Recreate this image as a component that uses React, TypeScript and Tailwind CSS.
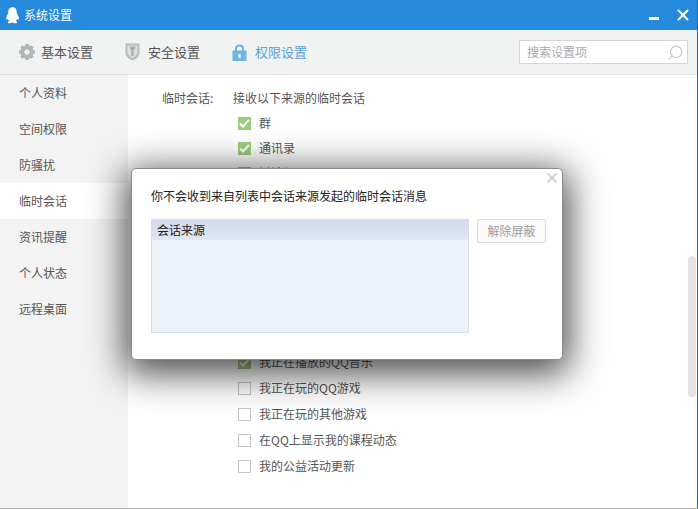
import { Search, X } from "lucide-react";

const font = "font-['Noto_Sans_CJK_SC','Liberation_Sans',sans-serif]";

const sideItems = ["个人资料", "空间权限", "防骚扰", "临时会话", "资讯提醒", "个人状态", "远程桌面"];

const bottomItems = [
  { label: "我正在播放的QQ音乐", checked: true },
  { label: "我正在玩的QQ游戏", checked: false },
  { label: "我正在玩的其他游戏", checked: false },
  { label: "在QQ上显示我的课程动态", checked: false },
  { label: "我的公益活动更新", checked: false },
];

function Penguin() {
  return (
    <svg width="13" height="17" viewBox="0 0 13 17" fill="white">
      <path d="M6.5 0.3C3.4 0.3 2.3 2.6 2.3 5.2C2.3 6.4 1.7 7.2 1 8.6C0.1 10.4 -0.1 12.2 0.4 12.6C0.8 12.9 1.4 12.4 1.8 11.8C2.1 12.8 2.6 13.4 3.2 14C2.1 14.3 1.6 15 2 15.7C2.6 16.6 5.2 16.4 6.5 15.6C7.8 16.4 10.4 16.6 11 15.7C11.4 15 10.9 14.3 9.8 14C10.4 13.4 10.9 12.8 11.2 11.8C11.6 12.4 12.2 12.9 12.6 12.6C13.1 12.2 12.9 10.4 12 8.6C11.3 7.2 10.7 6.4 10.7 5.2C10.7 2.6 9.6 0.3 6.5 0.3Z" />
    </svg>
  );
}

function Gear() {
  return (
    <svg width="18" height="18" viewBox="0 0 18 18">
      <circle cx="9" cy="9" r="4.6" fill="none" stroke="#b2b6b6" strokeWidth="4" />
      <g stroke="#b2b6b6" strokeWidth="3.4">
        <path d="M9 1V3.5M9 14.5V17M1 9H3.5M14.5 9H17M3.4 3.4L5 5M13 13L14.6 14.6M14.6 3.4L13 5M5 13L3.4 14.6" />
      </g>
    </svg>
  );
}

function Shield() {
  return (
    <svg width="15" height="18" viewBox="0 0 15 18">
      <path d="M0.5 0.5H14.5V10C14.5 13.5 11 16 7.5 17.5C4 16 0.5 13.5 0.5 10Z" fill="#b8bcbc" />
      <path d="M2.5 2.5H12.5V9.5C12.5 12 9.8 14 7.5 15.2C5.2 14 2.5 12 2.5 9.5Z" fill="#dcdfdf" />
      <path d="M4 3.5H11L8.6 7.5V13H6.4V7.5Z" fill="#a8acac" />
    </svg>
  );
}

function Lock() {
  return (
    <svg width="15" height="17" viewBox="0 0 15 17">
      <path d="M4 8V4.6C4 2.6 5.5 1.4 7.5 1.4C9.5 1.4 11 2.6 11 4.6V8" fill="none" stroke="#6fb2ea" strokeWidth="2" />
      <rect x="0.5" y="6.5" width="14" height="10.5" fill="#6fb2ea" />
      <rect x="6.4" y="10" width="2.2" height="4" fill="#ffffff" />
    </svg>
  );
}

function Check({ checked }: { checked: boolean }) {
  if (!checked) {
    return <span className="w-[13px] h-[13px] border border-[#c4c4c4] bg-white shrink-0" />;
  }
  return (
    <span className="w-[13px] h-[13px] bg-[#9ccc7f] flex items-center justify-center shrink-0">
      <svg width="11" height="9" viewBox="0 0 11 9" fill="none" stroke="white" strokeWidth="2">
        <path d="M1 4.5L4 7.5L10 1" />
      </svg>
    </span>
  );
}

function Row({ label, checked }: { label: string; checked: boolean }) {
  return (
    <div className="flex items-center gap-2 h-[26px] text-xs text-[#555]">
      <Check checked={checked} />
      <span>{label}</span>
    </div>
  );
}

export default function App() {
  return (
    <div className={`relative w-[698px] h-[509px] overflow-hidden bg-white flex flex-col border-r border-b border-r-[#1d6fb5] border-b-[#b5b5b5] ${font}`}>
      {/* Title bar */}
      <div className="h-[30px] bg-[#2589dc] flex items-center pl-[6px] pr-[5px] text-white shrink-0">
        <Penguin />
        <span className="ml-[5px] text-xs">系统设置</span>
        <div className="ml-auto flex items-center gap-[15px]">
          <span className="w-[10px] h-[3px] bg-white mt-[6px]" />
          <X size={18} strokeWidth={2.6} />
        </div>
      </div>

      {/* Tabs */}
      <div className="h-[45px] bg-[#f1f3f3] border-b border-[#e0e2e2] flex items-center pl-[18px] pr-[9px] shrink-0 text-[13px] text-[#555]">
        <div className="flex items-center gap-[5px] w-[107px]">
          <Gear />
          <span>基本设置</span>
        </div>
        <div className="flex items-center gap-[8px] w-[107px]">
          <Shield />
          <span>安全设置</span>
        </div>
        <div className="flex items-center gap-[8px] text-[#5b9fd6]">
          <Lock />
          <span>权限设置</span>
        </div>
        <div className="ml-auto w-[169px] h-[24px] bg-white border border-[#d6d6d6] flex items-center justify-between pl-[7px] pr-[3px] text-xs text-[#aaa]">
          <span>搜索设置项</span>
          <Search size={17} strokeWidth={1.5} className="text-[#c4c4c4] -scale-x-100" />
        </div>
      </div>

      <div className="flex-1 flex min-h-0">
        {/* Sidebar */}
        <div className="w-[128px] bg-[#f3f3f3] shrink-0">
          {sideItems.map((item) => (
            <div
              key={item}
              className={`h-[36px] flex items-center pl-[19px] text-xs text-[#555] ${item === "临时会话" ? "bg-white" : ""}`}
            >
              {item}
            </div>
          ))}
        </div>

        {/* Settings content */}
        <div className="flex-1 relative pl-[34px] pt-[10px]">
          <div className="flex text-xs text-[#555] h-[26px] items-center">
            <span className="w-[71px]">临时会话:</span>
            <span>接收以下来源的临时会话</span>
          </div>
          <div className="pl-[76px]">
            <div className="-mt-px">
              <Row label="群" checked />
            </div>
            <div className="-mt-px">
              <Row label="通讯录" checked />
            </div>
            <div className="-mt-px">
              <Row label="讨论组" checked />
            </div>
            <div className="h-[163px]" />
            {bottomItems.map((item) => (
              <Row key={item.label} label={item.label} checked={item.checked} />
            ))}
          </div>
          {/* Scrollbar */}
          <div className="absolute right-[1px] top-[181px] w-[8px] h-[141px] rounded bg-[#e3e3e3]" />
        </div>
      </div>

      {/* Dialog */}
      <div className="absolute left-[131px] top-[168px] w-[432px] h-[192px] bg-white rounded-[5px] border border-[#8c8c8c] shadow-[0_8px_36px_6px_rgba(0,0,0,0.7)] pl-[19px] pt-[18px] text-xs">
        <X size={16} strokeWidth={2.8} className="absolute right-[2px] top-[1px] text-[#d4d4d4]" />
        <div className="text-[#222] leading-[18px]">你不会收到来自列表中会话来源发起的临时会话消息</div>
        <div className="flex items-start mt-[14px]">
          <div className="w-[318px] h-[114px] bg-[#eef3fb] border border-[#cfdeea]">
            <div className="h-[20px] bg-[linear-gradient(#d2dcea,#dfe7f2)] flex items-center pl-[5px] text-[#222]">会话来源</div>
          </div>
          <div className="ml-[8px] w-[69px] h-[24px] bg-[#fafafa] border border-[#dcdcdc] rounded-[2px] flex items-center justify-center text-[#9a9fa3]">
            解除屏蔽
          </div>
        </div>
      </div>
    </div>
  );
}
